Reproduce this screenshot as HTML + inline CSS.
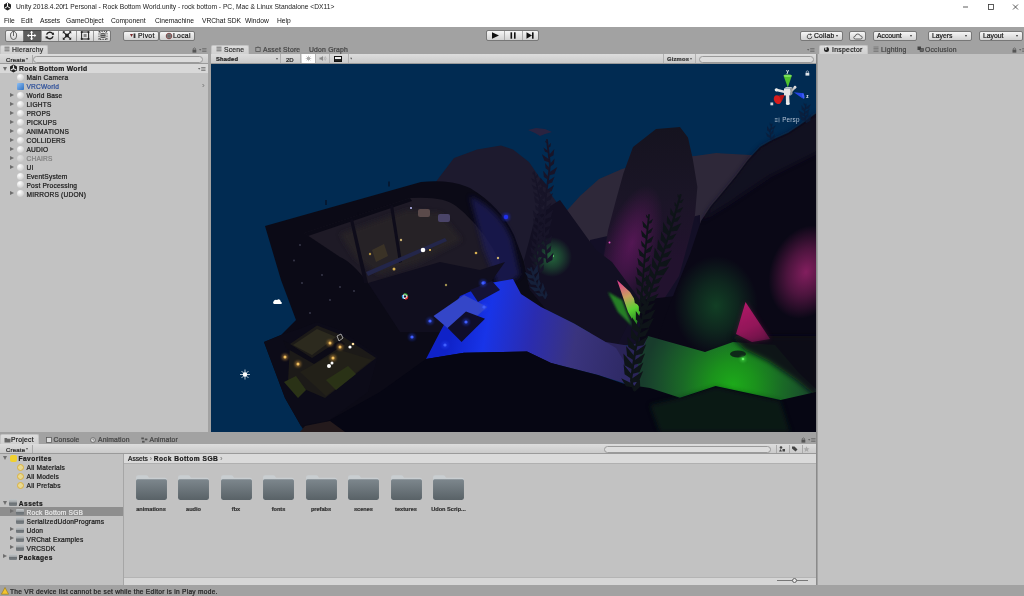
<!DOCTYPE html>
<html><head><meta charset="utf-8">
<style>
*{box-sizing:border-box;margin:0;padding:0}
html,body{width:1024px;height:596px;overflow:hidden}
body{background:#a2a2a2;font-family:"Liberation Sans",sans-serif;font-size:6.6px;color:#1a1a1a;position:relative;line-height:1}
.a{position:absolute}
.t{position:absolute;white-space:nowrap;transform:translateY(-50%);-webkit-text-stroke:0.22px currentColor}
.b{font-weight:bold}
.panel{position:absolute;background:#c2c2c2}
.tab{position:absolute;background:linear-gradient(#dcdcdc,#d0d0d0);border:1px solid #c4c4c4;border-bottom:none;border-radius:2px 2px 0 0}
.tbar{position:absolute;background:linear-gradient(#dddddd,#cacaca);border-bottom:1px solid #9a9a9a}
.btn{position:absolute;background:linear-gradient(#f6f6f6,#d2d2d2);border:1px solid #777;border-radius:2px}
.search{position:absolute;height:7px;background:#dcdcdc;border:1px solid #9a9a9a;border-radius:4px}
.sph{position:absolute;width:7px;height:7px;border-radius:50%;background:radial-gradient(circle at 35% 30%,#fff,#d8d8d8 60%,#b5b5b5)}
.arr{position:absolute;width:0;height:0;border-left:4px solid #6e6e6e;border-top:2.5px solid transparent;border-bottom:2.5px solid transparent}
.arrd{position:absolute;width:0;height:0;border-top:4px solid #6e6e6e;border-left:2.5px solid transparent;border-right:2.5px solid transparent}
.fold{position:absolute;background:linear-gradient(#c4c8ca,#a0a5a8 45%,#6a7074 55%,#7a8084);border-radius:1px}
#wrap{position:absolute;left:0;top:0;width:1024px;height:596px;will-change:transform}
</style></head><body><div id="wrap">

<div class="a" style="left:0px;top:0px;width:1024px;height:27px;background:#fff"></div>
<div class="t " style="left:16px;top:7px;font-size:6.7px;color:#1a1a1a;-webkit-text-stroke:0">Unity 2018.4.20f1 Personal - Rock Bottom World.unity - rock bottom - PC, Mac &amp; Linux Standalone &lt;DX11&gt;</div>
<svg class="a" style="left:3px;top:2px" width="9" height="9" viewBox="0 0 18 18"><path d="M9 1 L16 5 L16 13 L9 17 L2 13 L2 5 Z" fill="#222"/><path d="M9 9 L9 2 M9 9 L15 12.5 M9 9 L3 12.5" stroke="#fff" stroke-width="2"/></svg>
<div class="t " style="left:4px;top:21px;font-size:6.7px;color:#111;-webkit-text-stroke:0">File</div>
<div class="t " style="left:21px;top:21px;font-size:6.7px;color:#111;-webkit-text-stroke:0">Edit</div>
<div class="t " style="left:40px;top:21px;font-size:6.7px;color:#111;-webkit-text-stroke:0">Assets</div>
<div class="t " style="left:66px;top:21px;font-size:6.7px;color:#111;-webkit-text-stroke:0">GameObject</div>
<div class="t " style="left:111px;top:21px;font-size:6.7px;color:#111;-webkit-text-stroke:0">Component</div>
<div class="t " style="left:155px;top:21px;font-size:6.7px;color:#111;-webkit-text-stroke:0">Cinemachine</div>
<div class="t " style="left:202px;top:21px;font-size:6.7px;color:#111;-webkit-text-stroke:0">VRChat SDK</div>
<div class="t " style="left:245px;top:21px;font-size:6.7px;color:#111;-webkit-text-stroke:0">Window</div>
<div class="t " style="left:277px;top:21px;font-size:6.7px;color:#111;-webkit-text-stroke:0">Help</div>
<svg class="a" style="left:955px;top:0" width="69" height="14" viewBox="0 0 69 14"><path d="M8 7 H13" stroke="#333" stroke-width="0.8"/><rect x="33.5" y="4.5" width="5" height="5" fill="none" stroke="#333" stroke-width="0.8"/><path d="M58 4.5 L63 9.5 M63 4.5 L58 9.5" stroke="#333" stroke-width="0.8"/></svg>
<div class="btn" style="left:5px;top:30px;width:106px;height:12px;"></div>
<div class="a" style="left:23px;top:30px;width:18px;height:12px;background:#5d5d5d;border-top:1px solid #444;border-bottom:1px solid #444"></div>
<div class="a" style="left:41px;top:31px;width:1px;height:10px;background:#9a9a9a"></div>
<div class="a" style="left:58px;top:31px;width:1px;height:10px;background:#9a9a9a"></div>
<div class="a" style="left:76px;top:31px;width:1px;height:10px;background:#9a9a9a"></div>
<div class="a" style="left:93px;top:31px;width:1px;height:10px;background:#9a9a9a"></div>
<div class="a" style="left:23px;top:31px;width:1px;height:10px;background:#777"></div>
<svg class="a" style="left:5px;top:30px" width="106" height="12" viewBox="5 30 106 12"><g fill="none" stroke="#555" stroke-width="0.9"><path d="M10.5 36 Q10 32.5 12 32.5 L12.3 31.5 H14.8 L15.2 32.5 Q17 32.5 16.6 36 Q16.5 39.5 13.5 39.5 Q10.8 39.5 10.5 36 Z"/><path d="M13.5 32 V36"/></g><g stroke="#fff" stroke-width="1.2" fill="#fff"><path d="M31.6 31.5 V39.5 M27.6 35.5 H35.6"/><path d="M30.4 32.6 L31.6 31 L32.8 32.6 Z M30.4 38.4 L31.6 40 L32.8 38.4 Z M28.7 34.3 L27.1 35.5 L28.7 36.7 Z M34.5 34.3 L36.1 35.5 L34.5 36.7 Z" stroke-width="0.4"/></g><g fill="none" stroke="#222" stroke-width="1.5"><path d="M46.6 34.6 A3.4 3.2 0 0 1 52.8 33.8"/><path d="M53 36.4 A3.4 3.2 0 0 1 46.8 37.2"/></g><path d="M51.6 35 L54.2 34.8 L53.6 32.2 Z M48 36.2 L45.4 36.4 L46 39 Z" fill="#222"/><g stroke="#222" stroke-width="1.1"><path d="M63.3 31.8 L70.7 39.2 M70.7 31.8 L63.3 39.2"/></g><rect x="65.2" y="33.7" width="3.6" height="3.6" fill="#222"/><path d="M62.8 31.3 H65.2 L62.8 33.7 Z M71.2 31.3 V33.7 L68.8 31.3 Z M62.8 39.7 V37.3 L65.2 39.7 Z M71.2 39.7 H68.8 L71.2 37.3 Z" fill="#222"/><rect x="81.6" y="32" width="7" height="7" fill="none" stroke="#222" stroke-width="1"/><rect x="83.6" y="34" width="3" height="3" fill="#888"/><g fill="#222"><rect x="80.8" y="31.2" width="1.8" height="1.8"/><rect x="87.6" y="31.2" width="1.8" height="1.8"/><rect x="80.8" y="38" width="1.8" height="1.8"/><rect x="87.6" y="38" width="1.8" height="1.8"/></g><g stroke="#333" stroke-width="0.8" fill="none"><rect x="99" y="31.5" width="8" height="8" stroke-dasharray="1.4 1"/><circle cx="103" cy="35.5" r="2.3"/><path d="M103 33.5 V37.5 M101 35.5 H105 M99 31.5 L101.3 33.8 M107 31.5 L104.7 33.8 M99 39.5 L101.3 37.2 M107 39.5 L104.7 37.2"/></g></svg>
<div class="btn" style="left:123px;top:31px;width:36px;height:10px;"></div>
<div class="btn" style="left:159px;top:31px;width:36px;height:10px;"></div>
<div class="t " style="left:138px;top:36px;font-size:6.8px;letter-spacing:0.3px">Pivot</div>
<svg class="a" style="left:129px;top:32px" width="8" height="8" viewBox="0 0 8 8"><path d="M1 2 L4 2 L2.5 5 Z" fill="#7a2a2a"/><rect x="4.6" y="1.5" width="1.8" height="4.5" fill="#333"/></svg>
<div class="t " style="left:173px;top:36px;font-size:6.8px;letter-spacing:0.3px">Local</div>
<svg class="a" style="left:165px;top:32px" width="8" height="8" viewBox="0 0 8 8"><circle cx="4" cy="4" r="2.8" fill="#8a8a8a" stroke="#7a2a2a" stroke-width="0.7"/><path d="M1.2 4 H6.8 M4 1.2 V6.8" stroke="#444" stroke-width="0.5"/></svg>
<div class="btn" style="left:486px;top:30px;width:53px;height:11px;"></div>
<div class="a" style="left:504px;top:31px;width:1px;height:9px;background:#aaa"></div>
<div class="a" style="left:522px;top:31px;width:1px;height:9px;background:#aaa"></div>
<svg class="a" style="left:486px;top:30px" width="53" height="11" viewBox="0 0 53 11"><path d="M6 2.2 L13 5.5 L6 8.8 Z" fill="#111"/><rect x="24.5" y="2.3" width="1.6" height="6.4" fill="#111"/><rect x="28" y="2.3" width="1.6" height="6.4" fill="#111"/><path d="M40.5 2.3 L46 5.5 L40.5 8.7 Z" fill="#111"/><rect x="46" y="2.3" width="1.6" height="6.4" fill="#111"/></svg>
<div class="btn" style="left:800px;top:31px;width:43px;height:10px;"></div>
<div class="t " style="left:814px;top:36px;font-size:6.8px;letter-spacing:0.2px">Collab</div>
<svg class="a" style="left:806px;top:32.5px" width="7" height="7" viewBox="0 0 7 7"><path d="M5.8 3.5 A2.3 2.3 0 1 1 4.6 1.5" fill="none" stroke="#444" stroke-width="0.9"/><path d="M4 0.3 L6 1.5 L4.2 2.8 Z" fill="#444"/></svg>
<div class="a" style="left:836px;top:35px;width:0;height:0;border-top:2.5px solid #333;border-left:1.8px solid transparent;border-right:1.8px solid transparent"></div>
<div class="btn" style="left:849px;top:31px;width:17px;height:10px;"></div>
<svg class="a" style="left:852.5px;top:32.5px" width="10" height="7" viewBox="0 0 10 7"><path d="M2.5 6 Q0.8 6 0.8 4.5 Q0.8 3.2 2.3 3.2 Q2.5 1 4.8 1 Q6.8 1 7.2 2.8 Q9.2 2.8 9.2 4.5 Q9.2 6 7.5 6 Z" fill="#e8e8e8" stroke="#444" stroke-width="0.8"/></svg>
<div class="btn" style="left:873px;top:31px;width:44px;height:10px;"></div>
<div class="t " style="left:877px;top:36px;font-size:6.8px">Account</div>
<div class="btn" style="left:928px;top:31px;width:44px;height:10px;"></div>
<div class="t " style="left:932px;top:36px;font-size:6.8px">Layers</div>
<div class="btn" style="left:979px;top:31px;width:44px;height:10px;"></div>
<div class="t " style="left:983px;top:36px;font-size:6.8px">Layout</div>
<div class="a" style="left:910px;top:35px;width:0;height:0;border-top:2.5px solid #333;border-left:1.8px solid transparent;border-right:1.8px solid transparent"></div>
<div class="a" style="left:965px;top:35px;width:0;height:0;border-top:2.5px solid #333;border-left:1.8px solid transparent;border-right:1.8px solid transparent"></div>
<div class="a" style="left:1016px;top:35px;width:0;height:0;border-top:2.5px solid #333;border-left:1.8px solid transparent;border-right:1.8px solid transparent"></div>
<div class="panel" style="left:0px;top:54px;width:208px;height:378px;"></div>
<div class="tab" style="left:0px;top:44.6px;width:47.5px;height:9.4px;"></div>
<div class="t " style="left:12px;top:49.5px;font-size:6.8px;letter-spacing:0.25px;color:#333">Hierarchy</div>
<svg class="a" style="left:4px;top:46px" width="6" height="6" viewBox="0 0 6 6"><path d="M0.5 1.2 H5.5 M0.5 3 H5.5 M0.5 4.8 H5.5" stroke="#555" stroke-width="0.8"/></svg>
<div class="tbar" style="left:0px;top:54px;width:208px;height:10px;"></div>
<div class="t " style="left:6px;top:59.8px;font-size:6px;letter-spacing:0.2px;color:#222">Create</div>
<div class="a" style="left:26px;top:58px;width:0;height:0;border-top:2.2px solid #555;border-left:1.6px solid transparent;border-right:1.6px solid transparent"></div>
<div class="a" style="left:31.5px;top:55px;width:1px;height:8px;background:#aaa"></div>
<div class="search" style="left:33px;top:55.5px;width:170px;height:7.5px;"></div>
<div class="a" style="left:0px;top:64px;width:208px;height:9px;background:#d8d8d8"></div>
<div class="t b" style="left:19px;top:68.5px;font-size:6.8px;letter-spacing:0.3px">Rock Bottom World</div>
<div class="t " style="left:26.5px;top:77.8px;color:#1a1a1a;font-size:6.6px;letter-spacing:0.2px">Main Camera</div>
<div class="sph" style="left:17px;top:73.9px;width:7px;height:7px;"></div>
<div class="t " style="left:26.5px;top:86.8px;color:#2d4f9a;font-size:6.6px;letter-spacing:0.2px">VRCWorld</div>
<div class="a" style="left:17px;top:82.9px;width:7px;height:7px;background:linear-gradient(135deg,#8ec0f5,#2f6fc0);border-radius:1px"></div>
<div class="t " style="left:26.5px;top:95.8px;color:#1a1a1a;font-size:6.6px;letter-spacing:0.2px">World Base</div>
<div class="sph" style="left:17px;top:91.9px;width:7px;height:7px;"></div>
<div class="arr" style="left:10px;top:92.9px;width:0px;height:0px;"></div>
<div class="t " style="left:26.5px;top:104.8px;color:#1a1a1a;font-size:6.6px;letter-spacing:0.2px">LIGHTS</div>
<div class="sph" style="left:17px;top:101.0px;width:7px;height:7px;"></div>
<div class="arr" style="left:10px;top:102.0px;width:0px;height:0px;"></div>
<div class="t " style="left:26.5px;top:113.8px;color:#1a1a1a;font-size:6.6px;letter-spacing:0.2px">PROPS</div>
<div class="sph" style="left:17px;top:109.8px;width:7px;height:7px;"></div>
<div class="arr" style="left:10px;top:110.8px;width:0px;height:0px;"></div>
<div class="t " style="left:26.5px;top:122.8px;color:#1a1a1a;font-size:6.6px;letter-spacing:0.2px">PICKUPS</div>
<div class="sph" style="left:17px;top:118.8px;width:7px;height:7px;"></div>
<div class="arr" style="left:10px;top:119.8px;width:0px;height:0px;"></div>
<div class="t " style="left:26.5px;top:131.8px;color:#1a1a1a;font-size:6.6px;letter-spacing:0.2px">ANIMATIONS</div>
<div class="sph" style="left:17px;top:127.8px;width:7px;height:7px;"></div>
<div class="arr" style="left:10px;top:128.8px;width:0px;height:0px;"></div>
<div class="t " style="left:26.5px;top:140.8px;color:#1a1a1a;font-size:6.6px;letter-spacing:0.2px">COLLIDERS</div>
<div class="sph" style="left:17px;top:136.9px;width:7px;height:7px;"></div>
<div class="arr" style="left:10px;top:137.9px;width:0px;height:0px;"></div>
<div class="t " style="left:26.5px;top:149.8px;color:#1a1a1a;font-size:6.6px;letter-spacing:0.2px">AUDIO</div>
<div class="sph" style="left:17px;top:145.9px;width:7px;height:7px;"></div>
<div class="arr" style="left:10px;top:146.9px;width:0px;height:0px;"></div>
<div class="t " style="left:26.5px;top:158.8px;color:#808080;font-size:6.6px;letter-spacing:0.2px">CHAIRS</div>
<div class="sph" style="left:17px;top:154.5px;width:7px;height:7px;opacity:.55"></div>
<div class="arr" style="left:10px;top:155.5px;width:0px;height:0px;"></div>
<div class="t " style="left:26.5px;top:167.8px;color:#1a1a1a;font-size:6.6px;letter-spacing:0.2px">UI</div>
<div class="sph" style="left:17px;top:163.5px;width:7px;height:7px;"></div>
<div class="arr" style="left:10px;top:164.5px;width:0px;height:0px;"></div>
<div class="t " style="left:26.5px;top:176.8px;color:#1a1a1a;font-size:6.6px;letter-spacing:0.2px">EventSystem</div>
<div class="sph" style="left:17px;top:172.5px;width:7px;height:7px;"></div>
<div class="t " style="left:26.5px;top:185.8px;color:#1a1a1a;font-size:6.6px;letter-spacing:0.2px">Post Processing</div>
<div class="sph" style="left:17px;top:181.4px;width:7px;height:7px;"></div>
<div class="t " style="left:26.5px;top:194.8px;color:#1a1a1a;font-size:6.6px;letter-spacing:0.2px">MIRRORS (UDON)</div>
<div class="sph" style="left:17px;top:190.4px;width:7px;height:7px;"></div>
<div class="arr" style="left:10px;top:191.4px;width:0px;height:0px;"></div>
<div class="arrd" style="left:3px;top:66.5px;width:0px;height:0px;"></div>
<div class="t " style="left:202px;top:86.4px;color:#888;font-size:8px">›</div>
<svg class="a" style="left:9px;top:64px" width="9" height="9" viewBox="0 0 18 18"><path d="M9 1 L16 5 L16 13 L9 17 L2 13 L2 5 Z" fill="#222"/><path d="M9 9 L9 3 M9 9 L14.5 12 M9 9 L3.5 12" stroke="#e8e8e8" stroke-width="2.2"/><path d="M9 1 L16 5" stroke="#e8e8e8" stroke-width="0"/></svg>
<svg class="a" style="left:191.5px;top:47px" width="16" height="6" viewBox="0 0 16 6"><rect x="0.5" y="2.6" width="3.8" height="3" fill="#555"/><path d="M1.3 2.6 V1.6 Q2.4 0.3 3.5 1.6 V2.6" fill="none" stroke="#555" stroke-width="0.7"/><path d="M7 2 L9.4 2 L8.2 3.8 Z" fill="#666"/><path d="M10.2 1.5 H14.5 M10.2 3 H14.5 M10.2 4.5 H14.5" stroke="#666" stroke-width="0.7"/></svg>
<svg class="a" style="left:1011.5px;top:47px" width="16" height="6" viewBox="0 0 16 6"><rect x="0.5" y="2.6" width="3.8" height="3" fill="#555"/><path d="M1.3 2.6 V1.6 Q2.4 0.3 3.5 1.6 V2.6" fill="none" stroke="#555" stroke-width="0.7"/><path d="M7 2 L9.4 2 L8.2 3.8 Z" fill="#666"/><path d="M10.2 1.5 H14.5 M10.2 3 H14.5 M10.2 4.5 H14.5" stroke="#666" stroke-width="0.7"/></svg>
<svg class="a" style="left:800.5px;top:437px" width="16" height="6" viewBox="0 0 16 6"><rect x="0.5" y="2.6" width="3.8" height="3" fill="#555"/><path d="M1.3 2.6 V1.6 Q2.4 0.3 3.5 1.6 V2.6" fill="none" stroke="#555" stroke-width="0.7"/><path d="M7 2 L9.4 2 L8.2 3.8 Z" fill="#666"/><path d="M10.2 1.5 H14.5 M10.2 3 H14.5 M10.2 4.5 H14.5" stroke="#666" stroke-width="0.7"/></svg>
<svg class="a" style="left:197px;top:65.5px" width="10" height="6" viewBox="6 0 10 6"><path d="M7 2 L9.4 2 L8.2 3.8 Z" fill="#666"/><path d="M10.2 1.5 H14.5 M10.2 3 H14.5 M10.2 4.5 H14.5" stroke="#666" stroke-width="0.7"/></svg>
<svg class="a" style="left:806px;top:47px" width="10" height="6" viewBox="6 0 10 6"><path d="M7 2 L9.4 2 L8.2 3.8 Z" fill="#666"/><path d="M10.2 1.5 H14.5 M10.2 3 H14.5 M10.2 4.5 H14.5" stroke="#666" stroke-width="0.7"/></svg>
<div class="panel" style="left:211px;top:54px;width:605.3px;height:378px;"></div>
<div class="tab" style="left:211px;top:44.6px;width:37.5px;height:9.4px;"></div>
<div class="t " style="left:224px;top:49.5px;font-size:6.8px;letter-spacing:0.2px;color:#333">Scene</div>
<svg class="a" style="left:216px;top:46px" width="6" height="6" viewBox="0 0 6 6"><path d="M0.5 1.2 H5.5 M0.5 3 H5.5 M0.5 4.8 H5.5" stroke="#555" stroke-width="0.8"/></svg>
<div class="t " style="left:263px;top:49.5px;font-size:6.8px;color:#444;letter-spacing:0.2px">Asset Store</div>
<svg class="a" style="left:255px;top:46px" width="6" height="6" viewBox="0 0 6 6"><rect x="0.8" y="1.5" width="4.4" height="4" fill="none" stroke="#555" stroke-width="0.8"/><path d="M2 1.5 Q3 -0.5 4 1.5" fill="none" stroke="#555" stroke-width="0.6"/></svg>
<div class="t " style="left:309px;top:49.5px;font-size:6.8px;color:#444;letter-spacing:0.2px">Udon Graph</div>
<div class="tbar" style="left:211px;top:54px;width:605.3px;height:10px;"></div>
<div class="t b" style="left:216px;top:59.8px;font-size:5.8px;letter-spacing:0.2px;color:#222">Shaded</div>
<div class="a" style="left:275.5px;top:58px;width:0;height:0;border-top:2.2px solid #555;border-left:1.6px solid transparent;border-right:1.6px solid transparent"></div>
<div class="a" style="left:302px;top:54px;width:13px;height:9px;background:#fff"></div>
<div class="a" style="left:280px;top:54px;width:1px;height:9px;background:#b0b0b0"></div>
<div class="a" style="left:300px;top:54px;width:1px;height:9px;background:#b0b0b0"></div>
<div class="a" style="left:315px;top:54px;width:1px;height:9px;background:#b0b0b0"></div>
<div class="a" style="left:329px;top:54px;width:1px;height:9px;background:#b0b0b0"></div>
<div class="a" style="left:348px;top:54px;width:1px;height:9px;background:#b0b0b0"></div>
<div class="a" style="left:663px;top:54px;width:1px;height:9px;background:#b0b0b0"></div>
<div class="a" style="left:694.5px;top:54px;width:1px;height:9px;background:#b0b0b0"></div>
<div class="t " style="left:286px;top:59.8px;font-size:6px;color:#222">2D</div>
<svg class="a" style="left:302px;top:54px" width="50" height="9" viewBox="302 54 50 9"><g stroke="#888" stroke-width="0.6"><circle cx="308.5" cy="58.5" r="1.3" fill="#aaa"/><path d="M308.5 55.8 V56.6 M308.5 60.4 V61.2 M305.8 58.5 H306.6 M310.4 58.5 H311.2 M306.6 56.6 L307.2 57.2 M310.4 56.6 L309.8 57.2 M306.6 60.4 L307.2 59.8 M310.4 60.4 L309.8 59.8"/></g><path d="M319.5 57.5 H321 L323 56 V61 L321 59.5 H319.5 Z" fill="#888"/><path d="M324 57 Q325 58.5 324 60 M325.2 56.3 Q326.8 58.5 325.2 60.7" stroke="#999" stroke-width="0.5" fill="none"/><path d="M350 57.8 L352.6 57.8 L351.3 59.6 Z" fill="#666"/></svg>
<div class="a" style="left:333.5px;top:56px;width:8.5px;height:6px;background:#222;border:1px solid #111"></div>
<div class="a" style="left:334.5px;top:57px;width:6.5px;height:2.2px;background:#eee"></div>
<div class="t b" style="left:667px;top:59.8px;font-size:5.8px;letter-spacing:0.2px;color:#333">Gizmos</div>
<div class="a" style="left:689.5px;top:58px;width:0;height:0;border-top:2.2px solid #555;border-left:1.6px solid transparent;border-right:1.6px solid transparent"></div>
<div class="search" style="left:699px;top:55.5px;width:114.5px;height:7.5px;"></div>
<div class="a" style="left:211px;top:63.5px;width:605.3px;height:368px;background:#012b52;overflow:hidden"><svg width="607" height="369" viewBox="211 63 607 369" style="position:absolute;left:0;top:-0.5px;display:block">
<defs>
<filter id="b1" x="-20%" y="-20%" width="140%" height="140%"><feGaussianBlur stdDeviation="0.8"/></filter>
<filter id="b2" x="-100%" y="-100%" width="300%" height="300%"><feGaussianBlur stdDeviation="2.5"/></filter>
<filter id="b5" x="-150%" y="-150%" width="400%" height="400%"><feGaussianBlur stdDeviation="6"/></filter>
<filter id="b10" x="-150%" y="-150%" width="400%" height="400%"><feGaussianBlur stdDeviation="12"/></filter>
<radialGradient id="gGreen" cx="733" cy="385" r="90" gradientUnits="userSpaceOnUse"><stop offset="0" stop-color="#1daa1a"/><stop offset="0.25" stop-color="#1b921c"/><stop offset="0.55" stop-color="#1a6a26"/><stop offset="0.85" stop-color="#194a2c"/><stop offset="1" stop-color="#183c2c"/></radialGradient>
<linearGradient id="gBlue" x1="450" y1="330" x2="625" y2="365" gradientUnits="userSpaceOnUse"><stop offset="0" stop-color="#0f22c8"/><stop offset="0.2" stop-color="#1834e8"/><stop offset="0.45" stop-color="#2a2cb0"/><stop offset="0.7" stop-color="#3a347e"/><stop offset="1" stop-color="#2f2a66"/></linearGradient>
<linearGradient id="gTall" x1="0" y1="127" x2="0" y2="260" gradientUnits="userSpaceOnUse"><stop offset="0" stop-color="#15131f"/><stop offset="0.5" stop-color="#1a1526"/><stop offset="1" stop-color="#22122e"/></linearGradient>
<linearGradient id="gLeaf" x1="618" y1="281" x2="636" y2="322" gradientUnits="userSpaceOnUse"><stop offset="0" stop-color="#e03a8e"/><stop offset="0.4" stop-color="#c9a060"/><stop offset="0.7" stop-color="#5ad032"/><stop offset="1" stop-color="#2a8a22"/></linearGradient>
<clipPath id="clip"><rect x="211" y="63" width="607" height="369"/></clipPath>
</defs>
<g clip-path="url(#clip)">
<rect x="211" y="63" width="607" height="369" fill="#012b52"/>
<!-- far hill -->
<path d="M555 225 L562 216 L580 196 L599 179 L622 169 L660 158 L695 156 L716 153 L751 155 L760 160 L760 300 L555 300 Z" fill="#2e2839"/>
<!-- rock behind building -->
<path d="M430 190 L438 179 L454 158 L477 149.5 L501 145.5 L513 149.5 L529 162 L555 200 L569 219 L595 251 L620 300 L430 300 Z" fill="#1d1a2e"/>
<path d="M590 240 L700 215 L700 345 L590 345 Z" fill="#130f26"/>
<path d="M596 300 L601 276 L608 230 L616 200 L623.5 173 L633 147 L656 129 L680 127 L688 137.5 L692.7 158.6 L697.4 187 L695 215 L690 236 L679 276 L660 305 Z" fill="url(#gTall)"/>
<radialGradient id="gl1"><stop offset="0" stop-color="#9a1c8a" stop-opacity="0.42"/><stop offset="0.5" stop-color="#9a1c8a" stop-opacity="0.23"/><stop offset="1" stop-color="#9a1c8a" stop-opacity="0"/></radialGradient><ellipse cx="632" cy="243" rx="26" ry="60" fill="url(#gl1)" transform="rotate(18 632 243)"/>
<circle cx="609.5" cy="242.5" r="1" fill="#e050c0"/>
<path d="M640 300 L818 280 L818 432 L640 432 Z" fill="#0a0816"/>
<path d="M818 112 L803 123 L788 133 L772 140 L760 147 L748 160 L736 176 L722 193 L711 206 L701 221 L690 254 L675 291 L664 320 L658 338 L697 352 L706 351 L736 338 L745 303 L770 338 L802 368 L818 390 Z" fill="#0a0816"/>
<path d="M818 112 L803 123 L788 133 L772 140 L760 147 L748 160 L736 176 L722 193 L711 206 L701 221 L730 203 L770 176 L818 152 Z" fill="#171228" opacity="0.65" filter="url(#b2)"/>
<path d="M536 215 L560 200 L596 250 L612 262 L640 300 L630 320 L616 348 L574 323.5 L541 307 L530 290 L524 260 Z" fill="#120f22"/>
<path d="M606 342 L630 346 L652 337 L650 392 L626 388 Z" fill="#2a2458"/>
<path d="M648 336 L705 352 L733 342 L775 345 L798 372 L818 391 L818 410 L640 410 L638 360 Z" fill="url(#gGreen)"/>
<path d="M730 336 L818 336 L818 398 L796 380 L768 361 L745 350 Z" fill="#070a12" opacity="0.9" filter="url(#b2)"/>
<radialGradient id="gl2"><stop offset="0" stop-color="#1c8a38" stop-opacity="0.42"/><stop offset="0.5" stop-color="#1c8a38" stop-opacity="0.23"/><stop offset="1" stop-color="#1c8a38" stop-opacity="0"/></radialGradient><ellipse cx="716" cy="306" rx="42" ry="50" fill="url(#gl2)" transform="rotate(0 716 306)"/>
<linearGradient id="gMag" x1="742" y1="302" x2="760" y2="342" gradientUnits="userSpaceOnUse"><stop offset="0" stop-color="#b81a6c"/><stop offset="0.6" stop-color="#8a1656"/><stop offset="1" stop-color="#4a1038"/></linearGradient><path d="M736 334 L745.5 302 L770 339 L752 342 Z" fill="url(#gMag)"/>
<path d="M736 334 L745.5 302 L770 339 L752 342 Z" fill="#a3185f" opacity="0.35" filter="url(#b2)"/>
<radialGradient id="gl3"><stop offset="0" stop-color="#a02470" stop-opacity="0.8"/><stop offset="0.5" stop-color="#a02470" stop-opacity="0.44"/><stop offset="1" stop-color="#a02470" stop-opacity="0"/></radialGradient><ellipse cx="806" cy="272" rx="36" ry="48" fill="url(#gl3)" transform="rotate(20 806 272)"/>
<ellipse cx="738" cy="354" rx="8" ry="3.5" fill="#0e2a18"/>
<circle cx="743" cy="359" r="1.3" fill="#7dff7a"/>
<circle cx="743" cy="359" r="3" fill="#4ae04a" opacity="0.5" filter="url(#b1)"/>
<path d="M608 292 L622 300 L632 326 L618 312 Z" fill="#2a9a28" opacity="0.8" filter="url(#b1)"/>
<path d="M617 280 L630 292 L641 310 L636 326 L628 312 Z" fill="url(#gLeaf)"/>
<path d="M265 226 L421 182 Q450 179 470 188 Q500 206 514 235 L524 262 L530 290 L548 312 L560 380 L440 432 L305 432 L301 426 L285 398 L264 342 L281 335 L296 320 L281 280 Z" fill="#0b0a16"/>
<path d="M304 233 L410 198 Q444 196 456 206 Q484 228 500 262 L478 300 L400 300 L368 283 Q352 262 340 257 Z" fill="#1e1a26"/>
<path d="M340 234 L408 210 L440 213 L462 240 L420 262 L380 275 L355 258 Z" fill="#2a2528" opacity="0.7" filter="url(#b2)"/>
<path d="M304 233 L410 198 L412 201 L308 236 Z" fill="#0b0a16"/>
<path d="M350 220 L353 219 L368 283 L364 283 Z" fill="#0e0c1a"/>
<path d="M390 206 L393 205 L402 262 L399 263 Z" fill="#0e0c1a"/>
<path d="M470 196 Q500 210 512 240 L520 275 L500 290 L484 250 Z" fill="#1a1a5a" opacity="0.75" filter="url(#b2)"/>
<path d="M368 283 L440 262 L480 270 L505 262 L478 300 L440 332 L400 332 Z" fill="#100e1e"/>
<path d="M366 272 L445 238 L447 241 L368 276 Z" fill="#23264a"/>
<rect x="418" y="209" width="12" height="8" rx="2" fill="#5a4a4a"/><rect x="438" y="214" width="12" height="8" rx="2" fill="#4a4468"/>
<path d="M372 250 L384 244 L388 256 L376 262 Z" fill="#3a3226"/>
<circle cx="423" cy="250" r="2.3" fill="#ffffff"/>
<circle cx="430" cy="250" r="1" fill="#ffd060"/>
<circle cx="394" cy="269" r="1.5" fill="#d8b050"/>
<circle cx="476" cy="253" r="1.3" fill="#d8b050"/>
<circle cx="498" cy="258" r="1.2" fill="#c8b070"/>
<circle cx="411" cy="208" r="1" fill="#c0c0ff"/>
<circle cx="401" cy="240" r="1.2" fill="#c8b070"/>
<circle cx="370" cy="254" r="1.2" fill="#b09040"/>
<circle cx="446" cy="285" r="1.2" fill="#a09050"/>
<circle cx="506" cy="217" r="2.2" fill="#2030f0"/><circle cx="506" cy="217" r="4" fill="#2030f0" opacity="0.4" filter="url(#b1)"/>
<circle cx="484" cy="283" r="2" fill="#2838e8" opacity="0.8"/>
<circle cx="294" cy="260.5" r="0.9" fill="#3c3c4e"/>
<circle cx="302" cy="283" r="0.9" fill="#3c3c4e"/>
<circle cx="322" cy="275" r="0.9" fill="#3c3c4e"/>
<circle cx="340" cy="287" r="0.9" fill="#3c3c4e"/>
<circle cx="354" cy="291" r="0.9" fill="#3c3c4e"/>
<circle cx="310" cy="313" r="0.9" fill="#3c3c4e"/>
<circle cx="330" cy="300" r="0.9" fill="#3c3c4e"/>
<circle cx="300" cy="245" r="0.9" fill="#3c3c4e"/>
<path d="M326 200 V205 M389 181.5 V186.5 M358 212 V216" stroke="#0a0914" stroke-width="1"/>
<path d="M426 359 L440 332 L460 296 L490 283 L513 279 L521 294 L541 307 L574 323.5 L616 348 L640 388 L598 375 L551 363 L527 351.5 L464 352.7 Z" fill="url(#gBlue)"/>
<path d="M433.5 316 L464 295 L487.5 307 L470 322 L452 332 Z" fill="#3446c8"/>
<path d="M447.6 328 L466 311.6 L485 318.7 L461.6 342 Z" fill="#0f0d2a"/>
<path d="M470 290 L492 281 L500 290 L478 302 Z" fill="#141238"/>
<circle cx="483" cy="283" r="1.6" fill="#4a6aff"/><circle cx="483" cy="283" r="3.5" fill="#2a4aff" opacity="0.35" filter="url(#b1)"/>
<circle cx="484" cy="307" r="1.6" fill="#4a6aff"/><circle cx="484" cy="307" r="3.5" fill="#2a4aff" opacity="0.35" filter="url(#b1)"/>
<circle cx="430" cy="321" r="1.6" fill="#4a6aff"/><circle cx="430" cy="321" r="3.5" fill="#2a4aff" opacity="0.35" filter="url(#b1)"/>
<circle cx="466" cy="322" r="1.6" fill="#4a6aff"/><circle cx="466" cy="322" r="3.5" fill="#2a4aff" opacity="0.35" filter="url(#b1)"/>
<circle cx="445" cy="345" r="1.6" fill="#4a6aff"/><circle cx="445" cy="345" r="3.5" fill="#2a4aff" opacity="0.35" filter="url(#b1)"/>
<circle cx="412" cy="337" r="1.6" fill="#4a6aff"/><circle cx="412" cy="337" r="3.5" fill="#2a4aff" opacity="0.35" filter="url(#b1)"/>
<radialGradient id="gl4"><stop offset="0" stop-color="#2fa04c" stop-opacity="0.6"/><stop offset="0.5" stop-color="#2fa04c" stop-opacity="0.33"/><stop offset="1" stop-color="#2fa04c" stop-opacity="0"/></radialGradient><ellipse cx="552" cy="257" rx="20" ry="20" fill="url(#gl4)" transform="rotate(0 552 257)"/>
<circle cx="552.5" cy="256" r="1.2" fill="#7dff8a"/>
<path d="M264 342 L281 335 L296 330 L317 322 L340 330 L378 356 L368 392 L330 420 L301 426 L285 398 Z" fill="#0c0b18"/>
<path d="M290 344 L317 325.5 L339 334 L376 358 L325 398 L288 382 Z" fill="#1c1a18"/>
<path d="M293 345 L317 329 L336 337 L312 355 Z" fill="#2c2a1e"/>
<path d="M300 372 L340 350 L372 360 L326 396 Z" fill="#222018"/>
<path d="M283 340 L290 344 L312 358 L340 340 L345 344 L314 364 L286 348 Z" fill="#0c0b16"/>
<path d="M284 382 L296 376 L306 390 L298 398 Z" fill="#2a3216"/><path d="M326 380 L348 366 L356 374 L336 390 Z" fill="#2a3216"/>
<circle cx="285" cy="357" r="1.5" fill="#ffd878"/><circle cx="285" cy="357" r="3.2" fill="#e0a040" opacity="0.45" filter="url(#b1)"/>
<circle cx="298" cy="364" r="1.5" fill="#ffd878"/><circle cx="298" cy="364" r="3.2" fill="#e0a040" opacity="0.45" filter="url(#b1)"/>
<circle cx="330" cy="343" r="1.5" fill="#ffd878"/><circle cx="330" cy="343" r="3.2" fill="#e0a040" opacity="0.45" filter="url(#b1)"/>
<circle cx="340" cy="347" r="1.5" fill="#ffd878"/><circle cx="340" cy="347" r="3.2" fill="#e0a040" opacity="0.45" filter="url(#b1)"/>
<circle cx="333" cy="358" r="1.5" fill="#ffd878"/><circle cx="333" cy="358" r="3.2" fill="#e0a040" opacity="0.45" filter="url(#b1)"/>
<circle cx="329" cy="366" r="2" fill="#fff"/><circle cx="332" cy="363" r="1.5" fill="#fff"/><circle cx="350" cy="347" r="1.6" fill="#fff"/><circle cx="353" cy="344" r="1.3" fill="#ffe0a0"/>
<path d="M337 336 L341 334 L343 338 L339 341 Z" fill="none" stroke="#ddd" stroke-width="0.7"/>
<path d="M300 432 L330 420 L380 392 L426 359 L464 352.7 L527 351.5 L551 363 L598 375 L626 384.4 L650 388 L680 397.7 L715.6 386 L780.6 400 L818 391.5 L818 432 Z" fill="#060613"/>
<path d="M650 405 L680 398 L716 387 L780 401 L790 432 L660 432 Z" fill="#0b2516" opacity="0.6" filter="url(#b2)"/>
<path d="M300 432 L305 426 L330 421 L345 432 Z" fill="#241a1c"/>
<path d="M547.0 140.0 L547.7 146.1 L548.5 152.2 L549.2 158.3 L549.9 164.4 L549.3 170.4 L548.5 176.5 L547.7 182.6 L546.8 188.7 L546.0 194.7 L545.7 200.9 L545.3 207.0 L545.0 213.1 L544.6 219.2 L544.3 225.4 L544.1 231.5 L544.7 237.6 L545.3 243.7 L545.9 249.8 L546.4 255.9 L547.0 262.0" fill="none" stroke="#171428" stroke-width="1.8" stroke-linecap="round" opacity="1.0"/><path d="M547.3 142.2 L544.9 140.5 L545.7 142.6 L547.4 143.2 Z M547.8 146.5 L551.0 142.8 L550.5 146.6 L548.0 148.1 Z M548.3 150.9 L543.4 147.4 L545.0 151.7 L548.6 152.9 Z M548.8 155.2 L554.3 149.0 L553.5 155.3 L549.1 157.8 Z M549.3 159.6 L541.9 154.3 L544.4 160.8 L549.7 162.4 Z M549.9 163.9 L554.6 158.5 L553.9 164.0 L550.2 166.8 Z M549.6 168.3 L545.0 162.9 L545.6 168.3 L549.2 171.1 Z M549.0 172.6 L557.3 166.9 L554.4 174.1 L548.6 175.5 Z M548.4 176.9 L543.2 170.8 L543.9 176.9 L548.0 179.8 Z M547.8 181.3 L554.5 176.8 L552.2 182.5 L547.4 184.2 Z M547.2 185.6 L540.2 177.4 L541.2 185.6 L546.9 188.6 Z M546.7 190.0 L554.1 184.9 L551.6 191.3 L546.3 192.9 Z M546.1 194.3 L539.4 186.4 L540.2 194.3 L545.7 197.3 Z M545.8 198.7 L552.9 193.0 L550.8 199.6 L545.6 201.7 Z M545.5 203.1 L538.6 196.1 L540.0 203.5 L545.4 206.1 Z M545.3 207.4 L551.6 202.4 L549.7 208.3 L545.1 210.5 Z M545.0 211.8 L538.1 204.8 L539.5 212.2 L544.9 214.9 Z M544.8 216.2 L553.3 209.4 L550.8 217.3 L544.6 219.3 Z M544.5 220.5 L537.8 213.7 L539.2 221.0 L544.4 223.7 Z M544.3 224.9 L552.5 218.3 L550.1 226.0 L544.1 228.0 Z M544.0 229.3 L536.8 222.0 L538.3 229.7 L543.9 232.4 Z M544.3 233.7 L549.8 227.8 L548.8 233.8 L544.6 236.8 Z M544.8 238.0 L536.1 231.6 L538.8 239.4 L545.0 241.2 Z M545.2 242.4 L552.1 234.9 L550.9 242.6 L545.5 245.6 Z M545.6 246.7 L538.3 241.3 L540.6 247.9 L545.9 250.0 Z M546.0 251.1 L551.4 245.2 L550.5 251.3 L546.3 254.3 Z M546.4 255.5 L537.2 248.6 L540.1 256.9 L546.7 258.7 Z M546.8 259.8 L553.5 252.5 L552.4 260.0 L547.1 263.1 Z" fill="#171428" opacity="1.0"/>
<path d="M534.0 172.0 L535.1 177.0 L536.1 181.9 L537.2 186.9 L538.2 191.8 L539.3 196.8 L539.9 201.7 L539.6 206.8 L539.3 211.8 L538.9 216.9 L538.6 221.9 L538.3 227.0 L538.0 232.1 L537.6 237.1 L537.1 242.1 L536.7 247.2 L536.2 252.2 L536.5 257.2 L537.7 262.1 L538.8 267.1 L540.0 272.0" fill="none" stroke="#171428" stroke-width="1.4" stroke-linecap="round" opacity="1.0"/><path d="M534.4 173.8 L531.9 172.3 L532.9 174.3 L534.6 174.6 Z M535.1 177.3 L537.8 173.7 L537.6 177.1 L535.4 178.5 Z M535.9 180.8 L531.1 178.1 L532.9 181.9 L536.2 182.5 Z M536.7 184.4 L541.1 178.3 L540.9 184.0 L537.1 186.4 Z M537.4 187.9 L531.6 184.6 L533.9 189.2 L537.9 190.1 Z M538.2 191.4 L542.8 185.0 L542.6 191.1 L538.7 193.7 Z M538.9 195.0 L532.9 191.5 L535.2 196.3 L539.4 197.3 Z M539.7 198.5 L544.6 191.7 L544.4 198.1 L540.2 200.8 Z M539.9 202.1 L534.0 196.1 L535.2 202.4 L539.7 204.5 Z M539.6 205.7 L544.4 201.9 L543.0 206.4 L539.5 208.1 Z M539.4 209.3 L535.0 204.8 L535.9 209.6 L539.3 211.7 Z M539.2 212.9 L544.3 208.8 L542.8 213.6 L539.0 215.3 Z M539.0 216.5 L532.8 210.2 L534.0 216.9 L538.8 219.0 Z M538.7 220.1 L544.5 215.6 L542.8 220.9 L538.6 222.6 Z M538.5 223.8 L532.9 218.1 L534.0 224.1 L538.4 226.2 Z M538.3 227.4 L543.8 223.0 L542.2 228.1 L538.1 229.9 Z M538.1 231.0 L532.6 225.4 L533.7 231.3 L537.9 233.5 Z M537.8 234.6 L543.7 230.1 L541.9 235.5 L537.6 237.1 Z M537.5 238.2 L532.4 232.8 L533.3 238.4 L537.2 240.7 Z M537.1 241.8 L543.7 236.9 L541.6 242.8 L536.9 244.4 Z M536.8 245.4 L531.2 239.4 L532.2 245.6 L536.6 248.0 Z M536.5 249.0 L544.0 243.4 L541.6 250.1 L536.3 251.6 Z M536.2 252.6 L530.3 246.3 L531.3 252.8 L536.0 255.2 Z M536.3 256.2 L541.7 248.3 L541.6 255.6 L536.9 258.8 Z M537.1 259.7 L528.9 255.2 L532.2 261.6 L537.7 262.3 Z M537.9 263.2 L543.6 255.1 L543.5 262.7 L538.5 265.8 Z M538.8 266.7 L531.0 262.4 L534.1 268.5 L539.4 269.4 Z M539.6 270.2 L543.7 264.3 L543.6 269.8 L540.2 272.9 Z" fill="#171428" opacity="1.0"/>
<path d="M531.0 268.0 L531.5 269.6 L532.0 271.2 L532.5 272.8 L533.0 274.4 L533.5 276.0 L534.0 277.6 L534.5 279.2 L535.0 280.8 L535.5 282.3 L536.0 283.9 L536.9 285.4 L537.8 286.8 L538.7 288.2 L539.6 289.6 L540.5 291.0 L541.4 292.4 L542.3 293.8 L543.2 295.2 L544.1 296.6 L545.0 298.0" fill="none" stroke="#15203a" stroke-width="1.8" stroke-linecap="round" opacity="1.0"/><path d="M531.5 269.6 L526.7 267.4 L528.8 270.8 L531.9 271.0 Z M532.5 272.8 L537.6 264.2 L538.0 271.8 L533.3 275.4 Z M533.5 276.0 L524.6 271.9 L528.5 278.3 L534.3 278.6 Z M534.5 279.2 L538.9 271.7 L539.3 278.3 L535.3 281.8 Z M535.5 282.3 L527.2 278.5 L530.8 284.5 L536.3 285.0 Z M536.9 285.4 L538.8 278.2 L540.7 283.6 L538.4 287.7 Z M538.7 288.2 L529.3 286.6 L534.6 291.6 L540.2 290.5 Z M540.5 291.0 L542.8 282.6 L544.9 288.9 L542.0 293.3 Z M542.3 293.8 L534.7 292.5 L539.0 296.6 L543.8 296.1 Z M544.1 296.6 L545.9 289.9 L547.6 294.9 L545.6 298.9 Z" fill="#15203a" opacity="1.0"/>
<path d="M680.5 195.0 L677.7 204.7 L674.9 214.4 L672.1 224.2 L669.3 233.9 L666.1 243.5 L662.9 253.1 L659.7 262.7 L656.4 272.2 L653.4 281.9 L650.4 291.6 L647.4 301.2 L644.5 310.9 L642.1 320.7 L639.8 330.6 L637.4 340.4 L635.4 350.3 L633.9 360.3 L632.4 370.3 L631.1 380.3 L634.0 390.0" fill="none" stroke="#0e1418" stroke-width="2.1" stroke-linecap="round" opacity="1.0"/><path d="M679.9 197.2 L677.7 193.7 L677.6 196.9 L679.5 198.3 Z M678.6 201.6 L683.8 199.1 L681.6 202.9 L678.2 203.1 Z M677.3 206.0 L674.7 201.8 L674.5 205.6 L676.8 207.9 Z M676.1 210.5 L683.3 206.9 L680.2 212.3 L675.4 212.7 Z M674.8 214.9 L670.5 208.0 L670.2 214.2 L674.0 217.5 Z M673.5 219.3 L681.0 215.6 L677.8 221.2 L672.6 222.4 Z M672.2 223.7 L667.1 215.5 L666.8 222.9 L671.3 227.1 Z M671.0 228.1 L681.6 223.0 L677.1 230.8 L670.0 231.5 Z M669.7 232.6 L663.2 222.1 L662.8 231.5 L668.7 235.9 Z M668.3 237.0 L676.5 233.4 L672.8 239.2 L667.2 240.3 Z M666.9 241.3 L661.3 231.4 L660.6 240.1 L665.7 244.7 Z M665.4 245.7 L673.6 242.1 L669.9 247.9 L664.2 249.1 Z M663.9 250.0 L658.0 239.5 L657.3 248.7 L662.8 253.4 Z M662.5 254.4 L672.0 250.3 L667.7 257.0 L661.3 257.8 Z M661.0 258.7 L654.7 247.5 L653.9 257.3 L659.8 262.2 Z M659.5 263.1 L671.9 257.8 L666.3 266.4 L658.3 266.6 Z M658.0 267.4 L652.5 257.5 L651.8 266.2 L656.9 271.0 Z M656.6 271.8 L669.2 266.4 L663.5 275.2 L655.4 275.3 Z M655.2 276.2 L649.8 267.1 L649.3 275.2 L654.1 279.8 Z M653.8 280.6 L662.6 276.6 L658.7 282.9 L652.7 284.2 Z M652.5 285.0 L646.3 274.6 L645.7 283.8 L651.3 288.6 Z M651.1 289.4 L659.8 285.4 L656.0 291.6 L650.0 293.0 Z M649.7 293.8 L644.4 284.8 L644.0 292.8 L648.6 297.4 Z M648.4 298.1 L658.8 293.4 L654.2 300.8 L647.2 301.9 Z M647.0 302.5 L640.6 291.8 L640.1 301.4 L645.8 306.3 Z M645.6 306.9 L655.1 302.6 L650.9 309.4 L644.5 310.7 Z M644.4 311.4 L638.8 303.2 L638.9 310.8 L643.5 315.2 Z M643.3 315.8 L655.7 309.2 L650.7 318.7 L642.4 319.7 Z M642.3 320.3 L635.8 310.9 L635.9 319.6 L641.3 324.2 Z M641.2 324.8 L654.0 317.8 L648.8 327.7 L640.2 328.7 Z M640.1 329.2 L632.0 317.3 L632.0 328.4 L639.1 333.2 Z M639.0 333.7 L649.5 328.1 L645.2 336.1 L638.0 337.7 Z M637.9 338.2 L630.9 327.9 L631.0 337.4 L636.9 342.2 Z M636.8 342.6 L648.0 336.6 L643.5 345.2 L635.8 346.6 Z M635.8 347.1 L627.2 336.8 L628.3 347.0 L635.2 351.2 Z M635.2 351.7 L646.2 344.3 L642.4 353.7 L634.6 355.8 Z M634.5 356.2 L626.1 346.1 L627.1 356.1 L633.9 360.4 Z M633.8 360.8 L645.1 353.2 L641.2 362.9 L633.2 365.0 Z M633.2 365.3 L623.4 353.5 L624.5 365.2 L632.5 369.5 Z M632.5 369.9 L643.4 362.6 L639.6 371.9 L631.9 374.1 Z M631.8 374.4 L623.6 364.5 L624.6 374.3 L631.2 378.7 Z M631.2 379.0 L643.2 371.0 L639.0 381.2 L630.5 383.2 Z M632.0 383.4 L621.2 378.3 L625.9 386.2 L633.3 387.6 Z M633.3 387.8 L639.8 377.2 L640.2 386.7 L634.6 392.0 Z" fill="#0e1418" opacity="1.0"/>
<path d="M649.0 215.0 L648.5 219.7 L648.0 224.5 L647.5 229.2 L647.1 234.0 L646.6 238.7 L646.1 243.5 L645.6 248.2 L645.1 253.0 L644.7 257.7 L644.3 262.5 L643.9 267.2 L643.5 272.0 L643.2 276.8 L642.8 281.5 L642.4 286.3 L642.0 291.0 L641.5 295.8 L641.0 300.5 L640.5 305.3 L640.0 310.0" fill="none" stroke="#0e1418" stroke-width="1.8" stroke-linecap="round" opacity="1.0"/><path d="M648.8 217.4 L645.9 214.2 L646.4 217.4 L648.6 218.5 Z M648.3 222.1 L653.0 218.7 L651.4 222.9 L648.1 224.0 Z M647.8 226.9 L642.3 220.8 L643.2 227.0 L647.5 229.5 Z M647.3 231.6 L653.0 227.5 L651.1 232.5 L647.0 234.4 Z M646.8 236.4 L641.1 230.1 L642.0 236.5 L646.5 239.2 Z M646.3 241.1 L653.7 235.7 L651.3 242.3 L646.0 244.0 Z M645.8 245.9 L641.0 240.5 L641.8 246.0 L645.5 248.8 Z M645.3 250.6 L653.0 245.0 L650.5 251.8 L645.0 253.5 Z M644.9 255.3 L638.3 248.4 L639.5 255.6 L644.6 258.3 Z M644.5 260.1 L650.5 255.5 L648.7 261.0 L644.3 263.1 Z M644.1 264.9 L637.4 257.8 L638.6 265.1 L643.9 267.9 Z M643.7 269.6 L651.1 264.0 L648.8 270.7 L643.5 272.7 Z M643.3 274.4 L636.4 267.0 L637.7 274.7 L643.1 277.5 Z M643.0 279.1 L650.1 273.7 L647.9 280.2 L642.7 282.2 Z M642.6 283.9 L635.4 276.3 L636.7 284.2 L642.3 287.0 Z M642.2 288.6 L650.6 282.2 L648.0 289.9 L641.9 291.8 Z M641.7 293.4 L636.4 287.5 L637.3 293.5 L641.4 296.6 Z M641.2 298.1 L647.8 293.4 L645.7 299.2 L640.9 301.4 Z M640.7 302.9 L633.6 295.0 L634.8 303.0 L640.4 306.1 Z M640.2 307.6 L649.9 300.6 L646.8 309.2 L639.9 310.9 Z" fill="#0e1418" opacity="1.0"/>
<path d="M772.0 124.0 L771.8 124.8 L771.6 125.6 L771.4 126.4 L771.2 127.2 L771.0 128.0 L770.8 128.7 L770.6 129.5 L770.4 130.3 L770.2 131.1 L770.0 131.9 L770.1 132.7 L770.2 133.5 L770.3 134.3 L770.4 135.1 L770.5 136.0 L770.6 136.8 L770.7 137.6 L770.8 138.4 L770.9 139.2 L771.0 140.0" fill="none" stroke="#0b1d3a" stroke-width="1.2" stroke-linecap="round" opacity="0.8"/><path d="M771.7 125.3 L769.8 122.5 L769.8 125.1 L771.4 126.5 Z M771.0 128.0 L775.8 125.4 L773.8 129.1 L770.6 129.7 Z M770.4 130.6 L767.0 125.7 L767.0 130.2 L769.9 132.4 Z M770.2 133.3 L773.8 129.0 L773.3 133.3 L770.4 135.2 Z M770.5 136.0 L765.6 132.5 L767.3 136.8 L770.8 138.0 Z M770.8 138.7 L774.8 134.0 L774.3 138.7 L771.1 140.8 Z" fill="#0b1d3a" opacity="0.8"/>
<path d="M806.0 104.0 L805.9 104.9 L805.7 105.8 L805.5 106.7 L805.4 107.6 L805.2 108.5 L805.1 109.4 L805.0 110.3 L804.8 111.2 L804.6 112.1 L804.5 113.0 L804.6 113.9 L804.8 114.8 L805.0 115.7 L805.1 116.6 L805.2 117.5 L805.4 118.4 L805.5 119.3 L805.7 120.2 L805.9 121.1 L806.0 122.0" fill="none" stroke="#0b1d3a" stroke-width="1.2" stroke-linecap="round" opacity="0.8"/><path d="M805.8 105.1 L803.6 102.4 L803.9 105.1 L805.6 106.3 Z M805.4 107.4 L810.9 103.9 L808.9 108.4 L805.1 109.4 Z M805.1 109.6 L801.4 105.0 L801.7 109.5 L804.7 111.7 Z M804.7 111.9 L810.0 108.5 L808.1 112.9 L804.3 114.0 Z M804.7 114.1 L798.3 110.1 L800.6 115.4 L805.1 116.3 Z M805.1 116.4 L808.6 111.9 L808.3 116.3 L805.4 118.6 Z M805.4 118.6 L799.2 114.6 L801.4 119.9 L805.8 121.0 Z M805.8 120.9 L810.9 114.5 L810.4 120.7 L806.2 123.3 Z" fill="#0b1d3a" opacity="0.8"/>
<path d="M528 130 L536 128 L545 129 L552 132 L545 134 L540 136 L535 133 Z" fill="#2a2340"/>
<circle cx="405" cy="296.5" r="2.6" fill="#fff"/><circle cx="405" cy="296.5" r="2.6" fill="none" stroke="#e03030" stroke-width="1.3" stroke-dasharray="4 12.3"/><circle cx="405" cy="296.5" r="2.6" fill="none" stroke="#30a0e0" stroke-width="1.3" stroke-dasharray="4 12.3" stroke-dashoffset="-5.4"/><circle cx="405" cy="296.5" r="2.6" fill="none" stroke="#40c040" stroke-width="1.3" stroke-dasharray="4 12.3" stroke-dashoffset="-10.8"/><circle cx="405" cy="296.5" r="1.2" fill="#14122a"/>
<g stroke="#fff" stroke-width="0.7"><path d="M245 369.5 V379.5 M240 374.5 H250 M241.5 371 L248.5 378 M248.5 371 L241.5 378"/></g><circle cx="245" cy="374.5" r="2.2" fill="#fff"/>
<path d="M273 303 Q274 299 277 300 Q280 298 281 302 Q283 303 281 304 H274 Z" fill="#fff"/>
<g><path d="M776.5 88.5 L784 90.5 L784 93 L775.5 91 Z" fill="#e0e0e0"/><circle cx="776.3" cy="89.8" r="1.6" fill="#ececec"/><path d="M790 91 L794.5 86.5 L796 88 L791 93 Z" fill="#c8c8c8"/><circle cx="795" cy="87.2" r="1.4" fill="#dcdcdc"/><path d="M785.8 95 L789.2 95 L789.6 103.5 L786 103.5 Z" fill="#e6e6e6"/><ellipse cx="787.8" cy="103.8" rx="2" ry="1.3" fill="#f0f0f0"/><path d="M783.6 75.8 L791.8 75.8 L787.8 87.5 Z" fill="#4fc22e"/><ellipse cx="787.7" cy="75.8" rx="4.1" ry="1.2" fill="#7be05a"/><ellipse cx="777.6" cy="99.6" rx="3.6" ry="4.6" fill="#d61c1c" transform="rotate(-28 777.6 99.6)"/><path d="M779 95.5 L785 94.5 L781.5 102 Z" fill="#b81414"/><path d="M793.8 92.3 L803.8 93.2 L802.6 98.6 Z" fill="#2544e6"/><ellipse cx="803.3" cy="95.9" rx="1.1" ry="2.8" fill="#3d5cf5" transform="rotate(-12 803.3 95.9)"/><rect x="784" y="88.6" width="6.6" height="6.8" fill="#e4e4e4"/><path d="M784 88.6 L786 87.3 L792.4 87.3 L790.6 88.6 Z" fill="#f6f6f6"/><path d="M790.6 88.6 L792.4 87.3 L792.4 94 L790.6 95.4 Z" fill="#9c9c9c"/><rect x="770.4" y="102.5" width="2.8" height="2.8" fill="#cfd6de"/></g>
<text x="786.3" y="72.6" font-size="4.6" fill="#fff" font-family="Liberation Sans,sans-serif" font-weight="bold">y</text>
<text x="806.2" y="98" font-size="4.6" fill="#fff" font-family="Liberation Sans,sans-serif" font-weight="bold">z</text>
<text x="782.2" y="122.3" font-size="6.3" fill="#b4c2d4" font-family="Liberation Sans,sans-serif" letter-spacing="0.2">Persp</text>
<path d="M774.8 118.5 H777.6 M774.8 120 H777.6 M774.8 121.5 H777.6 M779 117.6 V122.4" stroke="#b4c2d4" stroke-width="0.6"/>
<rect x="805.5" y="72.8" width="3.8" height="2.8" fill="#dfe4ea"/><path d="M806.3 72.8 V71.5 Q807.4 70.2 808.5 71.5 V72.8" fill="none" stroke="#dfe4ea" stroke-width="0.6"/>
</g>
</svg>
</div>
<div class="panel" style="left:817.5px;top:54px;width:206.5px;height:530.5px;"></div>
<div class="tab" style="left:819px;top:44.6px;width:48.5px;height:9.4px;"></div>
<div class="t " style="left:832px;top:49.5px;font-size:6.8px;letter-spacing:0.3px;color:#222">Inspector</div>
<div class="a" style="left:823.5px;top:46.5px;width:5.5px;height:5.5px;background:#222;border-radius:50%"></div>
<div class="t b" style="left:825.3px;top:49.4px;font-size:4.5px;color:#fff">i</div>
<div class="t " style="left:881px;top:49.5px;font-size:6.8px;color:#444;letter-spacing:0.2px">Lighting</div>
<svg class="a" style="left:873px;top:46px" width="6" height="6" viewBox="0 0 6 6"><path d="M0.5 1 H5.5 M0.5 2.5 H5.5 M0.5 4 H5.5 M0.5 5.5 H5.5" stroke="#666" stroke-width="0.6"/></svg>
<div class="t " style="left:925px;top:49.5px;font-size:6.8px;color:#444;letter-spacing:0.2px">Occlusion</div>
<svg class="a" style="left:916.5px;top:46px" width="7" height="6" viewBox="0 0 7 6"><rect x="0.5" y="0.5" width="3.5" height="3.5" fill="#444"/><rect x="3" y="2.5" width="3.5" height="3.2" fill="#666" stroke="#333" stroke-width="0.5"/></svg>
<div class="a" style="left:816px;top:54px;width:1.4px;height:530.5px;background:#8a8a8a"></div>
<div class="panel" style="left:0px;top:444px;width:816px;height:140.5px;"></div>
<div class="tab" style="left:0px;top:434px;width:39px;height:10px;"></div>
<div class="t " style="left:11px;top:439.5px;font-size:6.8px;letter-spacing:0.25px;color:#222">Project</div>
<svg class="a" style="left:3.5px;top:436.5px" width="7" height="6" viewBox="0 0 7 6"><path d="M0.5 1 H2.8 L3.4 1.8 H6.5 V5.5 H0.5 Z" fill="#666"/></svg>
<div class="t " style="left:53.5px;top:439.5px;font-size:6.8px;color:#444;letter-spacing:0.15px">Console</div>
<svg class="a" style="left:46px;top:436.5px" width="6" height="6" viewBox="0 0 6 6"><rect x="0.6" y="0.6" width="4.8" height="4.8" fill="#ddd" stroke="#555" stroke-width="0.7"/></svg>
<div class="t " style="left:98px;top:439.5px;font-size:6.8px;color:#444;letter-spacing:0.15px">Animation</div>
<svg class="a" style="left:90px;top:436.5px" width="6" height="6" viewBox="0 0 6 6"><circle cx="3" cy="3" r="2.4" fill="#ddd" stroke="#555" stroke-width="0.7"/><path d="M3 1.5 V3 H4.2" stroke="#555" stroke-width="0.6" fill="none"/></svg>
<div class="t " style="left:149.5px;top:439.5px;font-size:6.8px;color:#444;letter-spacing:0.15px">Animator</div>
<svg class="a" style="left:141px;top:436.5px" width="7" height="6" viewBox="0 0 7 6"><rect x="0.3" y="0.5" width="2.6" height="1.8" fill="#555"/><rect x="3.8" y="1.5" width="2.6" height="1.8" fill="#555"/><rect x="1" y="3.8" width="2.6" height="1.8" fill="#555"/></svg>
<div class="tbar" style="left:0px;top:444px;width:816px;height:10px;"></div>
<div class="t " style="left:6px;top:449.6px;font-size:6px;letter-spacing:0.2px;color:#222">Create</div>
<div class="a" style="left:26px;top:448px;width:0;height:0;border-top:2.2px solid #555;border-left:1.6px solid transparent;border-right:1.6px solid transparent"></div>
<div class="a" style="left:31.5px;top:445px;width:1px;height:8px;background:#aaa"></div>
<div class="search" style="left:604px;top:445.5px;width:167px;height:7.5px;"></div>
<div class="a" style="left:776px;top:445px;width:1px;height:8px;background:#aaa"></div>
<div class="a" style="left:789px;top:445px;width:1px;height:8px;background:#aaa"></div>
<div class="a" style="left:801.5px;top:445px;width:1px;height:8px;background:#aaa"></div>
<svg class="a" style="left:777px;top:445px" width="36" height="8" viewBox="777 445 36 8"><circle cx="781" cy="447.5" r="1.3" fill="#444"/><rect x="782.5" y="449" width="2.5" height="2.5" fill="#444"/><path d="M779 451.5 L780.5 449 L782 451.5 Z" fill="#444"/><path d="M792 446.5 L794.5 446.5 L797.5 449.5 L795.5 451.5 L792 448.5 Z" fill="#444"/><path d="M806.5 446.2 L807.4 448.2 L809.5 448.4 L807.9 449.8 L808.4 451.9 L806.5 450.8 L804.6 451.9 L805.1 449.8 L803.5 448.4 L805.6 448.2 Z" fill="#aaa"/><circle cx="607.5" cy="448.8" r="1.2" fill="none" stroke="#777" stroke-width="0.5"/><path d="M608.4 449.8 L609.6 451" stroke="#777" stroke-width="0.5"/></svg>
<div class="a" style="left:123px;top:454px;width:1px;height:130.5px;background:#a6a6a6"></div>
<div class="a" style="left:124px;top:454px;width:692px;height:10px;background:#dadada;border-bottom:1px solid #b0b0b0"></div>
<div class="t " style="left:128px;top:459px;font-size:6.6px">Assets <span style="color:#888">›</span> <b style="letter-spacing:0.5px">Rock Bottom SGB</b> <span style="color:#888">›</span></div>
<div class="a" style="left:124px;top:576.5px;width:692px;height:8px;background:#d6d6d6;border-top:1px solid #b4b4b4"></div>
<div class="a" style="left:777px;top:580px;width:31px;height:1px;background:#777"></div>
<div class="a" style="left:792px;top:578px;width:5px;height:5px;background:#e8e8e8;border:1px solid #666;border-radius:50%"></div>
<div class="a" style="left:0px;top:506.5px;width:123px;height:9px;background:#8e8e8e"></div>
<div class="t b" style="left:18.5px;top:458.8px;color:#1a1a1a;font-size:6.6px;letter-spacing:0.45px">Favorites</div>
<div class="a" style="left:9.5px;top:454.9px;width:7px;height:7px;background:#f0d030;border-radius:2px"></div>
<div class="t " style="left:26.6px;top:467.8px;color:#1a1a1a;font-size:6.6px;letter-spacing:0.2px">All Materials</div>
<div class="a" style="left:17px;top:463.8px;width:7px;height:7px;border:1.5px solid #d9b040;border-radius:50%;background:#e8d890"></div>
<div class="t " style="left:26.6px;top:476.8px;color:#1a1a1a;font-size:6.6px;letter-spacing:0.2px">All Models</div>
<div class="a" style="left:17px;top:472.7px;width:7px;height:7px;border:1.5px solid #d9b040;border-radius:50%;background:#e8d890"></div>
<div class="t " style="left:26.6px;top:485.8px;color:#1a1a1a;font-size:6.6px;letter-spacing:0.2px">All Prefabs</div>
<div class="a" style="left:17px;top:481.5px;width:7px;height:7px;border:1.5px solid #d9b040;border-radius:50%;background:#e8d890"></div>
<div class="t b" style="left:18.8px;top:503.8px;color:#1a1a1a;font-size:6.6px;letter-spacing:0.45px">Assets</div>
<div class="fold" style="left:8.6px;top:499.40000000000003px;width:8px;height:6.4px;"></div>
<div class="t " style="left:26.6px;top:512.8px;color:#e8e8e8;font-size:6.6px;letter-spacing:0.2px">Rock Bottom SGB</div>
<div class="fold" style="left:16px;top:508.6px;width:8px;height:6.4px;"></div>
<div class="t " style="left:26.6px;top:521.8px;color:#1a1a1a;font-size:6.6px;letter-spacing:0.2px">SerializedUdonPrograms</div>
<div class="fold" style="left:16px;top:517.4px;width:8px;height:6.4px;"></div>
<div class="t " style="left:26.6px;top:530.8px;color:#1a1a1a;font-size:6.6px;letter-spacing:0.2px">Udon</div>
<div class="fold" style="left:16px;top:526.5999999999999px;width:8px;height:6.4px;"></div>
<div class="t " style="left:26.6px;top:539.8px;color:#1a1a1a;font-size:6.6px;letter-spacing:0.2px">VRChat Examples</div>
<div class="fold" style="left:16px;top:535.4px;width:8px;height:6.4px;"></div>
<div class="t " style="left:26.6px;top:548.8px;color:#1a1a1a;font-size:6.6px;letter-spacing:0.2px">VRCSDK</div>
<div class="fold" style="left:16px;top:544.4px;width:8px;height:6.4px;"></div>
<div class="t b" style="left:18.8px;top:557.8px;color:#1a1a1a;font-size:6.6px;letter-spacing:0.45px">Packages</div>
<div class="fold" style="left:8.6px;top:553.5px;width:8px;height:6.4px;"></div>
<div class="arrd" style="left:2.5px;top:456.4px;width:0px;height:0px;"></div>
<div class="arrd" style="left:2.5px;top:500.6px;width:0px;height:0px;"></div>
<div class="arr" style="left:10px;top:509.3px;width:0px;height:0px;"></div>
<div class="arr" style="left:10px;top:527.3px;width:0px;height:0px;"></div>
<div class="arr" style="left:10px;top:536.1px;width:0px;height:0px;"></div>
<div class="arr" style="left:10px;top:545.1px;width:0px;height:0px;"></div>
<div class="arr" style="left:2.5px;top:554.2px;width:0px;height:0px;"></div>
<div class="a" style="left:134.5px;top:473.5px;width:33px;height:27px;"><svg width="33" height="27" viewBox="0 0 32 26"><defs><linearGradient id="fg0" x1="0" y1="0" x2="0" y2="1"><stop offset="0" stop-color="#7d878d"/><stop offset="1" stop-color="#596267"/></linearGradient></defs><path d="M1 3 Q1 1 3 1 H11 Q12.5 1 13 2.5 L13.5 3.5 H29 Q31 3.5 31 5.5 V23 Q31 25 29 25 H3 Q1 25 1 23 Z" fill="#c9ced1"/><path d="M1 6.5 Q1 5 2.5 5 H29.5 Q31 5 31 6.5 V23 Q31 25 29 25 H3 Q1 25 1 23 Z" fill="url(#fg0)"/></svg></div>
<div class="t" style="left:151.0px;top:509.5px;transform:translate(-50%,-50%);font-size:5.6px;font-weight:bold;color:#333">animations</div>
<div class="a" style="left:177.0px;top:473.5px;width:33px;height:27px;"><svg width="33" height="27" viewBox="0 0 32 26"><defs><linearGradient id="fg1" x1="0" y1="0" x2="0" y2="1"><stop offset="0" stop-color="#7d878d"/><stop offset="1" stop-color="#596267"/></linearGradient></defs><path d="M1 3 Q1 1 3 1 H11 Q12.5 1 13 2.5 L13.5 3.5 H29 Q31 3.5 31 5.5 V23 Q31 25 29 25 H3 Q1 25 1 23 Z" fill="#c9ced1"/><path d="M1 6.5 Q1 5 2.5 5 H29.5 Q31 5 31 6.5 V23 Q31 25 29 25 H3 Q1 25 1 23 Z" fill="url(#fg1)"/></svg></div>
<div class="t" style="left:193.5px;top:509.5px;transform:translate(-50%,-50%);font-size:5.6px;font-weight:bold;color:#333">audio</div>
<div class="a" style="left:219.5px;top:473.5px;width:33px;height:27px;"><svg width="33" height="27" viewBox="0 0 32 26"><defs><linearGradient id="fg2" x1="0" y1="0" x2="0" y2="1"><stop offset="0" stop-color="#7d878d"/><stop offset="1" stop-color="#596267"/></linearGradient></defs><path d="M1 3 Q1 1 3 1 H11 Q12.5 1 13 2.5 L13.5 3.5 H29 Q31 3.5 31 5.5 V23 Q31 25 29 25 H3 Q1 25 1 23 Z" fill="#c9ced1"/><path d="M1 6.5 Q1 5 2.5 5 H29.5 Q31 5 31 6.5 V23 Q31 25 29 25 H3 Q1 25 1 23 Z" fill="url(#fg2)"/></svg></div>
<div class="t" style="left:236.0px;top:509.5px;transform:translate(-50%,-50%);font-size:5.6px;font-weight:bold;color:#333">fbx</div>
<div class="a" style="left:262.0px;top:473.5px;width:33px;height:27px;"><svg width="33" height="27" viewBox="0 0 32 26"><defs><linearGradient id="fg3" x1="0" y1="0" x2="0" y2="1"><stop offset="0" stop-color="#7d878d"/><stop offset="1" stop-color="#596267"/></linearGradient></defs><path d="M1 3 Q1 1 3 1 H11 Q12.5 1 13 2.5 L13.5 3.5 H29 Q31 3.5 31 5.5 V23 Q31 25 29 25 H3 Q1 25 1 23 Z" fill="#c9ced1"/><path d="M1 6.5 Q1 5 2.5 5 H29.5 Q31 5 31 6.5 V23 Q31 25 29 25 H3 Q1 25 1 23 Z" fill="url(#fg3)"/></svg></div>
<div class="t" style="left:278.5px;top:509.5px;transform:translate(-50%,-50%);font-size:5.6px;font-weight:bold;color:#333">fonts</div>
<div class="a" style="left:304.5px;top:473.5px;width:33px;height:27px;"><svg width="33" height="27" viewBox="0 0 32 26"><defs><linearGradient id="fg4" x1="0" y1="0" x2="0" y2="1"><stop offset="0" stop-color="#7d878d"/><stop offset="1" stop-color="#596267"/></linearGradient></defs><path d="M1 3 Q1 1 3 1 H11 Q12.5 1 13 2.5 L13.5 3.5 H29 Q31 3.5 31 5.5 V23 Q31 25 29 25 H3 Q1 25 1 23 Z" fill="#c9ced1"/><path d="M1 6.5 Q1 5 2.5 5 H29.5 Q31 5 31 6.5 V23 Q31 25 29 25 H3 Q1 25 1 23 Z" fill="url(#fg4)"/></svg></div>
<div class="t" style="left:321.0px;top:509.5px;transform:translate(-50%,-50%);font-size:5.6px;font-weight:bold;color:#333">prefabs</div>
<div class="a" style="left:347.0px;top:473.5px;width:33px;height:27px;"><svg width="33" height="27" viewBox="0 0 32 26"><defs><linearGradient id="fg5" x1="0" y1="0" x2="0" y2="1"><stop offset="0" stop-color="#7d878d"/><stop offset="1" stop-color="#596267"/></linearGradient></defs><path d="M1 3 Q1 1 3 1 H11 Q12.5 1 13 2.5 L13.5 3.5 H29 Q31 3.5 31 5.5 V23 Q31 25 29 25 H3 Q1 25 1 23 Z" fill="#c9ced1"/><path d="M1 6.5 Q1 5 2.5 5 H29.5 Q31 5 31 6.5 V23 Q31 25 29 25 H3 Q1 25 1 23 Z" fill="url(#fg5)"/></svg></div>
<div class="t" style="left:363.5px;top:509.5px;transform:translate(-50%,-50%);font-size:5.6px;font-weight:bold;color:#333">scenes</div>
<div class="a" style="left:389.5px;top:473.5px;width:33px;height:27px;"><svg width="33" height="27" viewBox="0 0 32 26"><defs><linearGradient id="fg6" x1="0" y1="0" x2="0" y2="1"><stop offset="0" stop-color="#7d878d"/><stop offset="1" stop-color="#596267"/></linearGradient></defs><path d="M1 3 Q1 1 3 1 H11 Q12.5 1 13 2.5 L13.5 3.5 H29 Q31 3.5 31 5.5 V23 Q31 25 29 25 H3 Q1 25 1 23 Z" fill="#c9ced1"/><path d="M1 6.5 Q1 5 2.5 5 H29.5 Q31 5 31 6.5 V23 Q31 25 29 25 H3 Q1 25 1 23 Z" fill="url(#fg6)"/></svg></div>
<div class="t" style="left:406.0px;top:509.5px;transform:translate(-50%,-50%);font-size:5.6px;font-weight:bold;color:#333">textures</div>
<div class="a" style="left:432.0px;top:473.5px;width:33px;height:27px;"><svg width="33" height="27" viewBox="0 0 32 26"><defs><linearGradient id="fg7" x1="0" y1="0" x2="0" y2="1"><stop offset="0" stop-color="#7d878d"/><stop offset="1" stop-color="#596267"/></linearGradient></defs><path d="M1 3 Q1 1 3 1 H11 Q12.5 1 13 2.5 L13.5 3.5 H29 Q31 3.5 31 5.5 V23 Q31 25 29 25 H3 Q1 25 1 23 Z" fill="#c9ced1"/><path d="M1 6.5 Q1 5 2.5 5 H29.5 Q31 5 31 6.5 V23 Q31 25 29 25 H3 Q1 25 1 23 Z" fill="url(#fg7)"/></svg></div>
<div class="t" style="left:448.5px;top:509.5px;transform:translate(-50%,-50%);font-size:5.6px;font-weight:bold;color:#333">Udon Scrip...</div>
<div class="t " style="left:10px;top:592.3px;font-size:6.6px;color:#222;letter-spacing:0.27px">The VR device list cannot be set while the Editor is in Play mode.</div>
<svg class="a" style="left:1px;top:587px" width="8" height="8" viewBox="0 0 8 8"><path d="M4 0.5 L7.6 7.2 H0.4 Z" fill="#f2c430" stroke="#8a6a00" stroke-width="0.5"/></svg>
</div></body></html>
